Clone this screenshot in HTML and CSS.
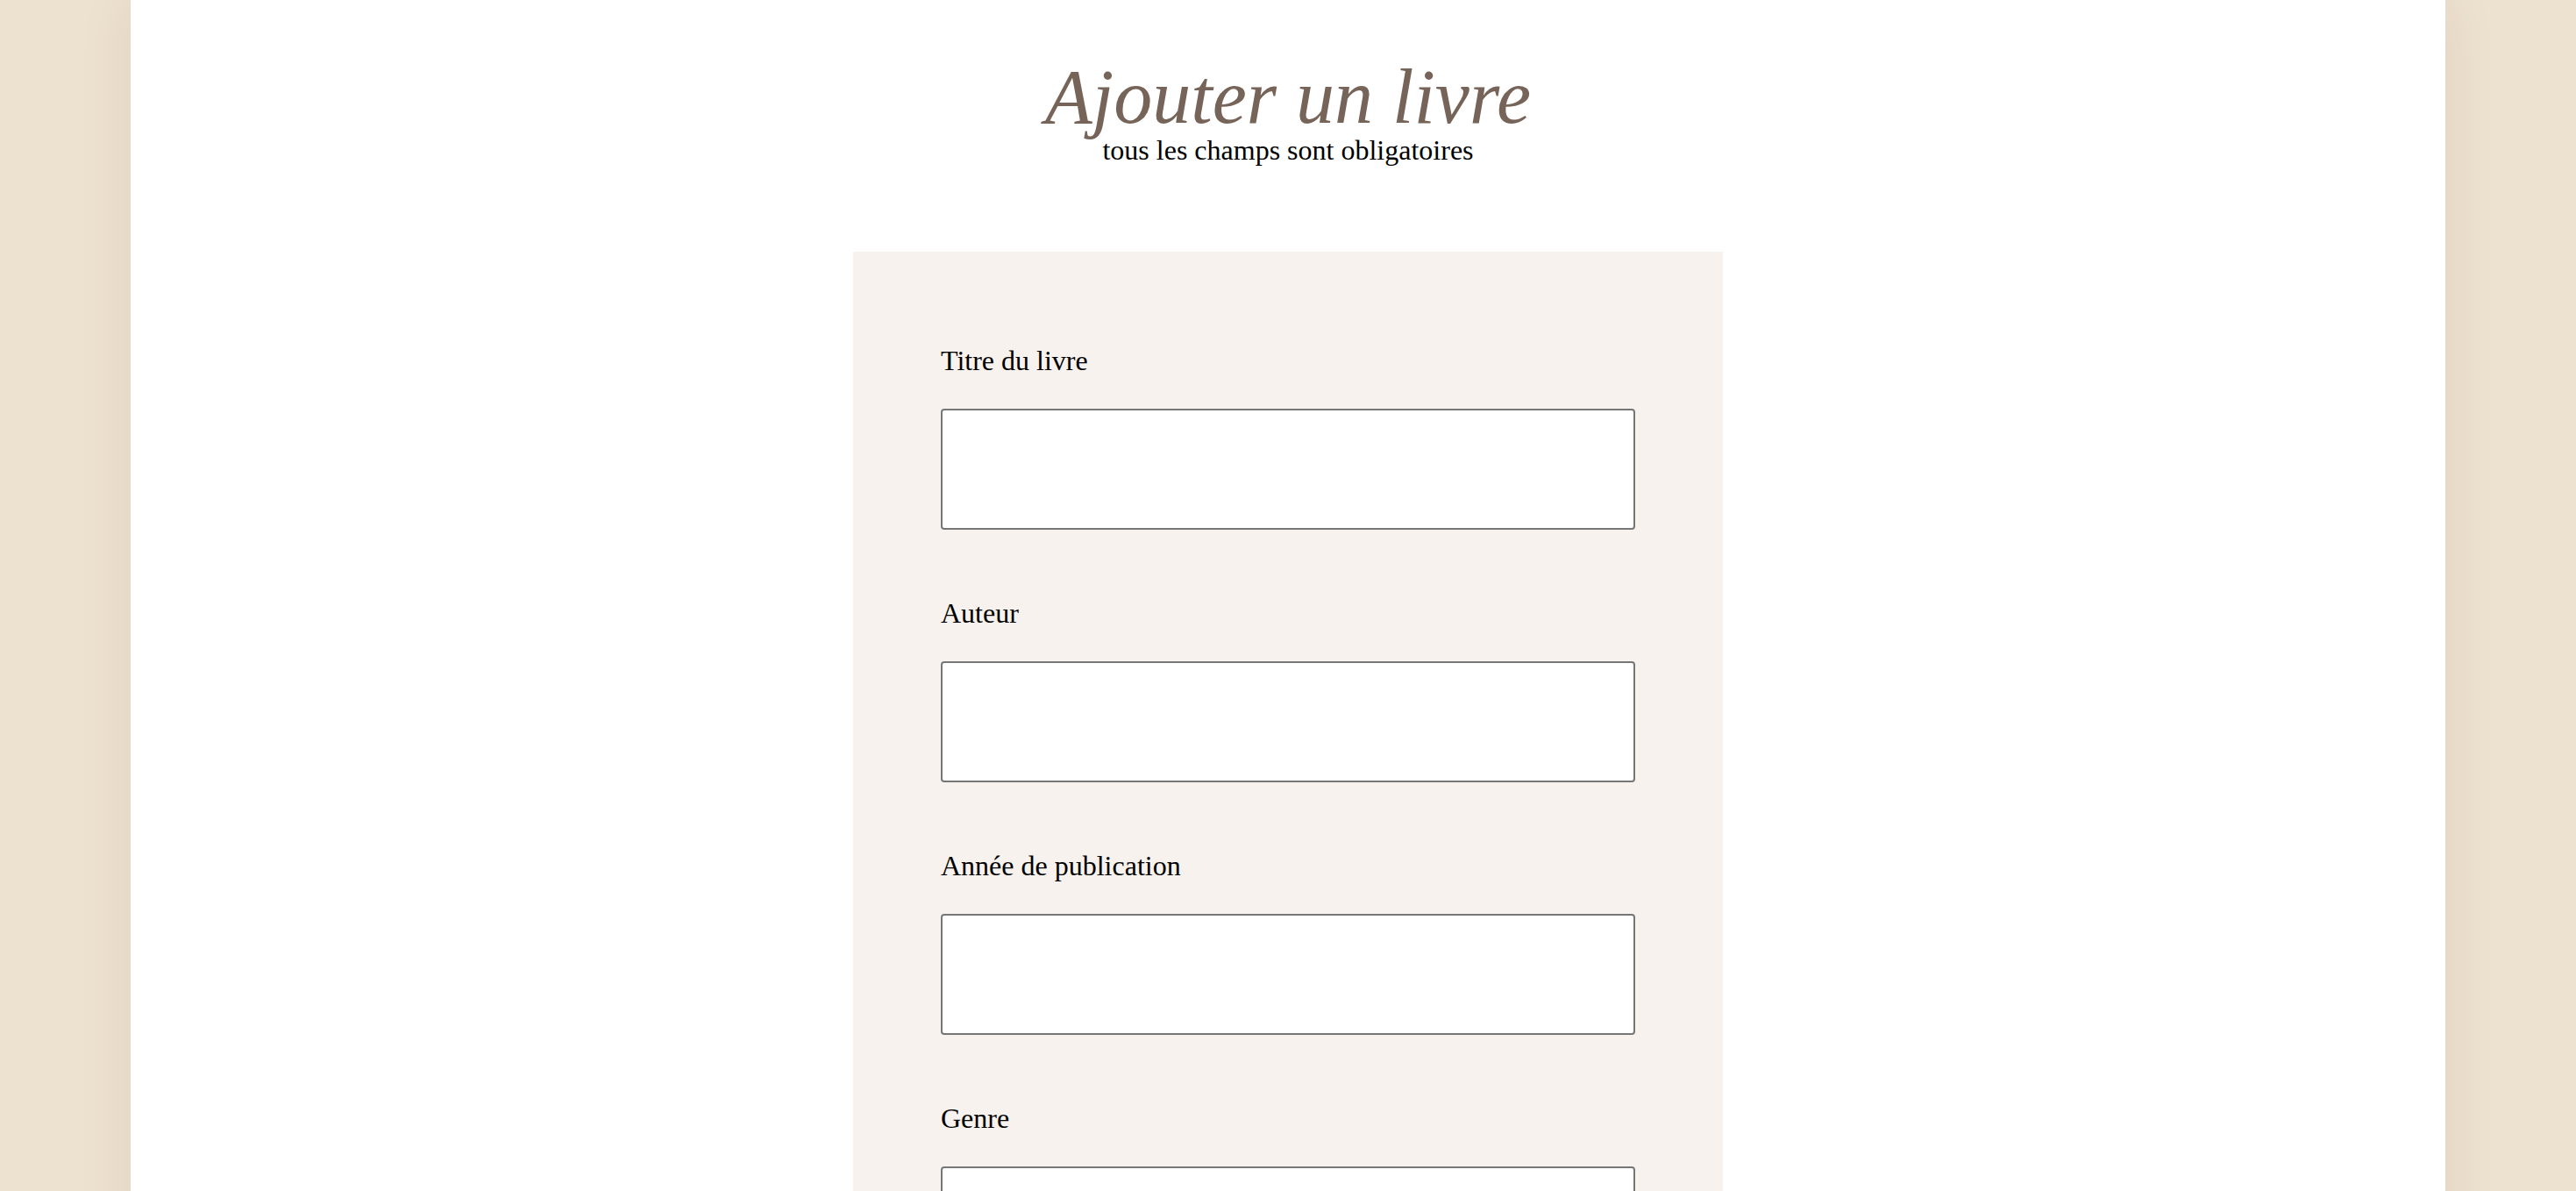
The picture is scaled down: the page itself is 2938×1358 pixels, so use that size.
FILE: index.html
```html
<!DOCTYPE html>
<html lang="fr">
<head>
<meta charset="utf-8">
<title>Ajouter un livre</title>
<link rel="stylesheet" href="styles.css">
</head>
<body>
<main class="page">
  <header class="header">
    <h1 class="title">Ajouter un livre</h1>
    <p class="subtitle">tous les champs sont obligatoires</p>
  </header>
  <form class="card">
    <div class="field">
      <label class="label" for="titre">Titre du livre</label>
      <input class="input" id="titre" type="text">
    </div>
    <div class="field">
      <label class="label" for="auteur">Auteur</label>
      <input class="input" id="auteur" type="text">
    </div>
    <div class="field">
      <label class="label" for="annee">Année de publication</label>
      <input class="input" id="annee" type="text">
    </div>
    <div class="field">
      <label class="label" for="genre">Genre</label>
      <input class="input" id="genre" type="text">
    </div>
  </form>
</main>
</body>
</html>
```
FILE: styles.css
```css
html {
  scrollbar-width: none;
}
html::-webkit-scrollbar {
  display: none;
}
body {
  margin: 0;
  background: #ede1cf;
  font-family: "Liberation Serif", "Times New Roman", serif;
  color: #000;
}
.page {
  width: 2640px;
  margin: 0 auto;
  min-height: 100vh;
  background: #fff;
  box-shadow: 0 0 60px rgba(60, 40, 20, 0.08);
  padding: 71px 0 120px;
  box-sizing: border-box;
}
.header {
  text-align: center;
}
.title {
  margin: 0;
  font-size: 88px;
  line-height: 80px;
  font-style: italic;
  font-weight: normal;
  color: #776459;
}
.subtitle {
  margin: 2px 0 0;
  font-size: 32px;
  line-height: 37px;
}
.card {
  width: 992px;
  margin: 97px auto 0;
  box-sizing: border-box;
  background: #f7f2ed;
  padding: 106px 100px 100px;
  display: flex;
  flex-direction: column;
  gap: 77px;
}
.field {
  display: flex;
  flex-direction: column;
}
.label {
  font-size: 32px;
  line-height: 37px;
  margin-bottom: 36px;
}
.input {
  height: 138px;
  box-sizing: border-box;
  border: 2px solid #767676;
  border-radius: 4px;
  background: #fff;
  font: inherit;
  font-size: 32px;
  padding: 0 16px;
  margin: 0;
}
```
